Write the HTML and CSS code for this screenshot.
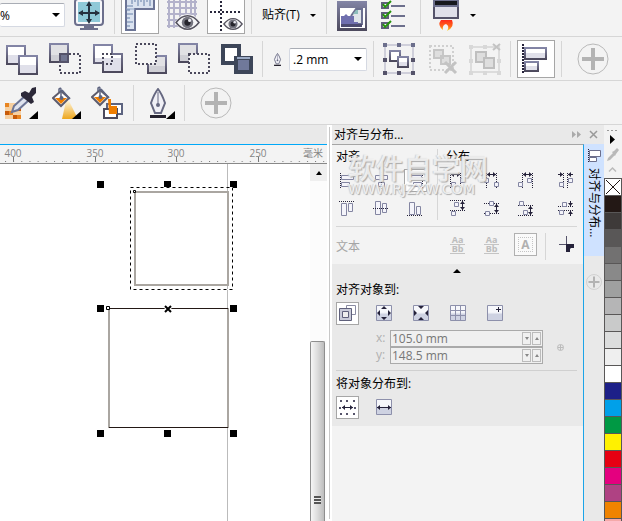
FILE: index.html
```html
<!DOCTYPE html>
<html lang="zh-CN">
<head>
    <meta charset="utf-8">
    <title>对齐与分布</title>
    <link rel="stylesheet" href="styles.css">
</head>
<body>
    <svg class="defs" aria-hidden="true">
        <defs>
            <linearGradient id="steel" x1="0" y1="0" x2="0" y2="1">
                <stop offset="0" stop-color="#8385a6"/>
                <stop offset="1" stop-color="#4c495c"/>
            </linearGradient>
            <linearGradient id="face" x1="0" y1="0" x2="0" y2="1">
                <stop offset="0.5" stop-color="#ffffff"/>
                <stop offset="0.5" stop-color="#e0e0ea"/>
            </linearGradient>
            <linearGradient id="shade" x1="0" y1="0" x2="0" y2="1">
                <stop offset="0.6" stop-color="#e1e1e4"/>
                <stop offset="0.6" stop-color="#cfcfd5"/>
            </linearGradient>
            <linearGradient id="glow" x1="0" y1="0" x2="0" y2="1">
                <stop offset="0" stop-color="#fdf3d8"/>
                <stop offset="1" stop-color="#eda61c"/>
            </linearGradient>
            <linearGradient id="flame" x1="0" y1="0" x2="0" y2="1">
                <stop offset="0" stop-color="#ff2a1a"/>
                <stop offset="0.6" stop-color="#ff6a1a"/>
                <stop offset="1" stop-color="#ffe02a"/>
            </linearGradient>
            <linearGradient id="tile" x1="0" y1="0" x2="0" y2="1">
                <stop offset="0.45" stop-color="#f6f7fb"/>
                <stop offset="0.6" stop-color="#ced2e2"/>
            </linearGradient>
            <marker id="tip" viewBox="0 0 3 5" refX="3" refY="2.500" markerWidth="3" markerHeight="5" markerUnits="userSpaceOnUse" orient="auto-start-reverse">
                <path d="M0 0L3 2.500L0 5Z" fill="#25223a"/>
            </marker>
        </defs>
        <symbol id="eye" viewBox="0 0 24 16">
            <path d="M0 8Q5 0 12 0T24 8Q19 16 12 16T0 8Z" fill="#fff"/>
            <path d="M1 8Q6 1.500 12 1.500T23 8Q18 14.500 12 14.500T1 8Z" fill="#f5f5f7" stroke="#55535f" stroke-width="1.500"/>
            <circle cx="12" cy="8" r="5.500" fill="#74747f"/>
            <circle cx="12" cy="8" r="3" fill="#26252d"/>
            <circle cx="14" cy="6" r="1.500" fill="#e8e8f0"/>
        </symbol>
        <symbol id="plus" viewBox="0 0 32 32">
            <circle cx="16" cy="16" r="15" fill="none" stroke="#b9b9b9"/>
            <path d="M16 5V27M5 16H27" stroke="#b3b3b3" stroke-width="4"/>
        </symbol>
        <symbol id="bucket" viewBox="0 0 20 21">
            <path d="M9 4L17 11L9 19L1 11Z" fill="#fff" stroke="#5d5c6d" stroke-width="2"/>
            <path d="M3 11H15L9 17Z" fill="#ee7d00"/>
            <path d="M9 11V3Q9 0 7 2V5M10 3L18 12" fill="none" stroke="#5d6480" stroke-width="1.500"/>
            <circle cx="9.500" cy="11" r="2" fill="#5d6480"/>
        </symbol>
        <symbol id="nib" viewBox="0 0 16 30">
            <path d="M8 1Q4 6 1 15L5 25H11L15 15Q12 6 8 1Z" fill="#f0f0f6" stroke="#666881" stroke-width="2"/>
            <path d="M8 4V17" stroke="#666881"/>
            <circle cx="8" cy="17" r="2" fill="#666881"/>
            <path d="M0 27H16V30H0Z" fill="#25222f"/>
        </symbol>
    </svg>

    <header class="toolbars">
        <div class="toolbar toolbar-top">
            <select class="zoom-level" aria-label="缩放级别"><option>%</option></select>
            <button class="tool" aria-label="全屏预览">
                <svg width="38" height="38" viewBox="0 0 38 38">
                    <rect x="5" y="3" width="28" height="26" rx="3" fill="#f7f7fa" stroke="#6c6f8c" stroke-width="2"/>
                    <rect x="8" y="6" width="22" height="20" fill="#8fc9d8"/>
                    <path d="M19 8V26M9 17H29" stroke="#26313f" stroke-width="2"/>
                    <path d="M19 5L22 10H16ZM19 28L22 23H16ZM8 17L13 14V20ZM30 17L25 14V20Z" fill="#26313f"/>
                    <path d="M14 31H24M10 33H28" stroke="#6c6f8c" stroke-width="2"/>
                </svg>
            </button>
            <span class="sep"></span>
            <button class="tool pressed" aria-label="标尺">
                <svg width="38" height="38" viewBox="0 0 38 38">
                    <path d="M5 1H33V13H14V34H5Z" fill="#dbe3f0" stroke="#6c7596" stroke-width="2"/>
                    <path d="M14 13H5" stroke="#8fa3c5"/>
                    <path d="M11 2V8M14 2V6M17 2V10M20 2V6M23 2V10M26 2V6M29 2V10M6 10H12M6 14H9M6 18H12M6 22H9M6 26H12M6 30H9" stroke="#6680a8"/>
                </svg>
            </button>
            <button class="tool" aria-label="网格">
                <svg width="38" height="38" viewBox="0 0 38 38">
                    <path d="M5 1V32M10 1V32M16 1V32M22 1V32M27 1V32M31 1V28M3 6H33M3 12H33M3 18H33M3 24H30M3 30H20" stroke="#b3b2cb" stroke-width="2"/>
                    <use href="#eye" x="11" y="18" width="25" height="17"/>
                </svg>
            </button>
            <button class="tool pressed" aria-label="辅助线">
                <svg width="38" height="38" viewBox="0 0 38 38">
                    <path d="M14 1V36M3 16H34" stroke="#29283d" stroke-width="2" stroke-dasharray="2 2"/>
                    <use href="#eye" x="16" y="21" width="20" height="14"/>
                </svg>
            </button>
            <span class="sep"></span>
            <button class="snap">贴齐(T)<i class="caret"></i></button>
            <span class="sep"></span>
            <button class="tool" aria-label="欢迎屏幕">
                <svg width="38" height="38" viewBox="0 0 38 38">
                    <path d="M4 5H34V35H4Z" fill="url(#steel)"/>
                    <path d="M7 12H32V32H7Z" fill="#fff"/>
                    <path d="M18 20L23 13H29V28H21" fill="#dfe4e9" stroke="#6c7090" stroke-width="2"/>
                    <path d="M20 18L23 14H25V18Z" fill="#8cbdbc"/>
                    <path d="M8 20H11L13 18L15 20H21V26H25V30H8Z" fill="#6f6fae"/>
                    <path d="M8 28H29V31H8Z" fill="#4c4b70"/>
                </svg>
            </button>
            <button class="tool" aria-label="选项">
                <svg width="38" height="38" viewBox="0 0 38 38">
                    <path d="M5 6H13V13H5ZM5 16H13V23H5ZM5 26H13V33H5Z" fill="#5f607b"/>
                    <path d="M7 8H11V11H7ZM7 18H11V21H7ZM7 28H11V31H7Z" fill="#fff"/>
                    <path d="M7 8L9 11L15 5M7 18L9 21L15 15M7 28L9 31L15 25" fill="none" stroke="#26920c" stroke-width="2"/>
                    <path d="M15 10H29M15 20H29M15 30H29" stroke="#6c6f8c" stroke-width="2"/>
                </svg>
            </button>
            <span class="sep"></span>
            <button class="tool" aria-label="应用程序启动器">
                <svg width="38" height="38" viewBox="0 0 38 38">
                    <path d="M7 1H31V22H7Z" fill="#e0e0ea" stroke="#55536a" stroke-width="2"/>
                    <path d="M6 1H32V11H6Z" fill="#6c6f8c"/>
                    <path d="M8 5H30V9H8Z" fill="#16181d"/>
                    <path d="M14 24H25Q28 31 20 35Q23 30 19 28Q15 29 16 34Q10 29 14 24Z" fill="url(#flame)"/>
                </svg>
            </button>
            <button class="drop" aria-label="更多"><i class="caret"></i></button>
        </div>

        <div class="toolbar">
            <button class="tool" aria-label="合并">
                <svg width="38" height="38" viewBox="0 0 38 38">
                    <path d="M4 6H22V24H4Z" fill="url(#face)" stroke="url(#steel)" stroke-width="2"/>
                    <path d="M16 16H34V34H16Z" fill="url(#face)" stroke="url(#steel)" stroke-width="2"/>
                </svg>
            </button>
            <button class="tool" aria-label="相交">
                <svg width="38" height="38" viewBox="0 0 38 38">
                    <path d="M4 4H22V22H4Z" fill="url(#shade)" stroke="url(#steel)" stroke-width="2"/>
                    <path d="M14 14H22V22H14Z" fill="#70748f" stroke="#55536a" stroke-width="2"/>
                    <path d="M23 14H34V33H14V23" fill="none" stroke="#4b495c" stroke-width="2" stroke-dasharray="2 2"/>
                </svg>
            </button>
            <button class="tool" aria-label="简化">
                <svg width="38" height="38" viewBox="0 0 38 38">
                    <path d="M5 5H23V14H33V32H14V23H5Z" fill="url(#face)" stroke="url(#steel)" stroke-width="2"/>
                    <path d="M14 23V14H23V24H14" fill="none" stroke="#4b495c" stroke-width="2" stroke-dasharray="2 2"/>
                </svg>
            </button>
            <button class="tool" aria-label="移除后面对象">
                <svg width="38" height="38" viewBox="0 0 38 38">
                    <path d="M16 16H34V33H16Z" fill="url(#shade)" stroke="url(#steel)" stroke-width="2"/>
                    <path d="M4 4H24V24H4Z" fill="#f4f4f4" stroke="#4b495c" stroke-width="2" stroke-dasharray="2 2"/>
                </svg>
            </button>
            <button class="tool" aria-label="移除前面对象">
                <svg width="38" height="38" viewBox="0 0 38 38">
                    <path d="M4 4H22V22H4Z" fill="url(#shade)" stroke="url(#steel)" stroke-width="2"/>
                    <path d="M14 14H34V33H14Z" fill="#f4f4f4" stroke="#4b495c" stroke-width="2" stroke-dasharray="2 2"/>
                </svg>
            </button>
            <button class="tool" aria-label="边界">
                <svg width="38" height="38" viewBox="0 0 38 38">
                    <path d="M5 6H21V23H5Z" fill="#fff" stroke="#3d4659" stroke-width="4"/>
                    <path d="M18 18H33V32H18Z" fill="#70799a" stroke="#3d4659" stroke-width="4"/>
                    <path d="M7 8H19V16H16V21H7Z" fill="#fff"/>
                    <path d="M20 19V18H32" stroke="#9aa9c4" fill="none" stroke-width="2"/>
                </svg>
            </button>
            <span class="sep"></span>
            <label class="pen-label" for="outline" aria-label="轮廓宽度">
                <svg width="9" height="13"><use href="#nib" width="9" height="13"/></svg>
            </label>
            <select class="outline-width" id="outline"><option>.2 mm</option></select>
            <span class="sep"></span>
            <button class="tool" aria-label="组合对象">
                <svg width="38" height="38" viewBox="0 0 38 38">
                    <path d="M5 5H33V33H5Z" fill="none" stroke="#cfcfda" stroke-width="2"/>
                    <path d="M3 3H7V7H3ZM17 3H21V7H17ZM31 3H35V7H31Z" fill="#6c6f8c"/>
                    <path d="M3 18H7V22H3ZM31 18H35V22H31ZM3 31H7V35H3ZM17 31H21V35H17ZM31 31H35V35H31Z" fill="#55536a"/>
                    <path d="M10 11H20V21H10Z" fill="#fff" stroke="url(#steel)" stroke-width="2"/>
                    <path d="M18 17H28V27H18Z" fill="url(#face)" stroke="url(#steel)" stroke-width="2"/>
                </svg>
            </button>
            <button class="tool" disabled aria-label="取消组合对象">
                <svg width="38" height="38" viewBox="0 0 38 38">
                    <path d="M7 6H30V30H7Z" fill="none" stroke="#d0d0d0" stroke-width="2" stroke-dasharray="2 2"/>
                    <path d="M11 10H20V18H11ZM18 16H27V24H18Z" fill="#dedede" stroke="#c6c6c6" stroke-width="2"/>
                    <path d="M22 22L33 33M33 22L22 33" stroke="#c3c3c3" stroke-width="3"/>
                </svg>
            </button>
            <button class="tool" disabled aria-label="取消组合所有对象">
                <svg width="38" height="38" viewBox="0 0 38 38">
                    <path d="M5 7H33V32H5Z" fill="none" stroke="#dcdcdc" stroke-width="2"/>
                    <path d="M3 5H7V9H3ZM17 5H21V9H17ZM3 19H7V23H3ZM31 19H35V23H31ZM3 31H7V35H3ZM17 31H21V35H17ZM31 31H35V35H31Z" fill="#d8d8d8"/>
                    <path d="M10 12H20V22H10Z" fill="#dedede" stroke="#bfbfbf" stroke-width="2"/>
                    <path d="M18 18H28V28H18Z" fill="#dedede" stroke="#bfbfbf" stroke-width="2"/>
                    <path d="M27 4L34 10M34 4L27 10" stroke="#c3c3c3" stroke-width="2"/>
                </svg>
            </button>
            <span class="sep"></span>
            <button class="tool pressed" aria-label="对齐与分布">
                <svg width="38" height="38" viewBox="0 0 38 38">
                    <path d="M6 4V34" stroke="#25223a" stroke-width="2" stroke-dasharray="2 1"/>
                    <path d="M8 8H29V19H8Z" fill="url(#face)" stroke="url(#steel)" stroke-width="2"/>
                    <path d="M8 22H21V31H8Z" fill="url(#face)" stroke="url(#steel)" stroke-width="2"/>
                </svg>
            </button>
            <span class="sep"></span>
            <button class="tool wide" aria-label="自定义属性栏"><svg width="32" height="32"><use href="#plus"/></svg></button>
        </div>

        <div class="toolbar">
            <button class="tool" aria-label="颜色滴管">
                <svg width="38" height="38" viewBox="0 0 38 38">
                    <path d="M2 19H18V35H2Z" fill="#f6cfa0"/>
                    <path d="M2 19H6V23H2ZM10 23H14V27H10ZM6 27H10V31H6ZM14 31H18V35H14Z" fill="#e88420"/>
                    <path d="M2 27H6V31H2ZM10 31H14V35H10ZM14 23H18V27H14Z" fill="#c85a08"/>
                    <path d="M22 12L26 16L15 26L9 28L11 22Z" fill="#dfe3ee" stroke="#6c7596" stroke-width="2"/>
                    <path d="M18 9L22 7L26 9L29 4L33 3V9L29 13L31 18L28 20L18 12Z" fill="#2b2838"/>
                    <path d="M26 35H35V27Z" fill="#000"/>
                </svg>
            </button>
            <button class="tool" aria-label="交互式填充">
                <svg width="38" height="38" viewBox="0 0 38 38">
                    <path d="M20 17H23L32 35H16Z" fill="url(#glow)"/>
                    <use href="#bucket" x="6" y="3" width="20" height="21"/>
                    <path d="M26 35H35V27Z" fill="#000"/>
                </svg>
            </button>
            <button class="tool" aria-label="智能填充">
                <svg width="38" height="38" viewBox="0 0 38 38">
                    <path d="M18 20H33V30H18Z" fill="#fff" stroke="#5d6480" stroke-width="2"/>
                    <path d="M15 25H28V34H15Z" fill="#fff" stroke="#4b495c" stroke-width="2"/>
                    <path d="M19 15H22V22H28V30H20Z" fill="#ee7d00"/>
                    <use href="#bucket" x="2" y="2" width="20" height="21"/>
                </svg>
            </button>
            <span class="sep"></span>
            <button class="tool" aria-label="轮廓笔">
                <svg width="38" height="38" viewBox="0 0 38 38">
                    <use href="#nib" x="10" y="4" width="16" height="30"/>
                    <path d="M26 35H35V27Z" fill="#000"/>
                </svg>
            </button>
            <span class="sep"></span>
            <button class="tool wide" aria-label="自定义工具箱"><svg width="32" height="32"><use href="#plus"/></svg></button>
        </div>
    </header>

    <main class="workspace">
        <section class="document">
            <div class="doc-tabs"></div>
            <svg class="ruler" height="18">
                <defs>
                    <pattern id="ticks" x="5" y="0" width="8.160" height="18" patternUnits="userSpaceOnUse">
                        <rect x="0" y="16" width="1" height="1" fill="#777"/>
                    </pattern>
                </defs>
                <rect width="100%" height="18" fill="url(#ticks)"/>
                <path d="M13.500 12V17M95.500 12V17M176.500 12V17M258.500 12V17" stroke="#777"/>
                <g class="ruler-text" text-anchor="middle">
                    <text x="13" y="12">400</text>
                    <text x="95" y="12">350</text>
                    <text x="176" y="12">300</text>
                    <text x="258" y="12">250</text>
                    <text x="313" y="12">毫米</text>
                </g>
            </svg>
            <div class="page">
                <svg class="drawing">
                    <path d="M227.500 0V2000" stroke="#bbb"/>
                    <g fill="none" stroke="#aaa6a1" stroke-width="2">
                        <rect x="135" y="28" width="93" height="93"/>
                        <path d="M109 144V264M228 144V264"/>
                    </g>
                    <path d="M109 144.500H228M109 263.500H228" stroke="#231815"/>
                    <path d="M97 17h7v7h-7zM164 17h7v7h-7zM230 17h7v7h-7zM97 141h7v7h-7zM230 141h7v7h-7zM97 266h7v7h-7zM164 266h7v7h-7zM230 266h7v7h-7z" fill="#000"/>
                    <rect x="130.500" y="23.500" width="102" height="102" fill="none" stroke="#fff"/>
                    <rect x="130.500" y="23.500" width="102" height="102" fill="none" stroke="#000" stroke-dasharray="3 3"/>
                    <path d="M133.500 26.500h2v2h-2zM106.500 142.500h3v3h-3z" fill="#fff" stroke="#000"/>
                    <path d="M165 142L171 148M171 142L165 148" stroke="#fff" stroke-width="4"/>
                    <path d="M165 142L171 148M171 142L165 148" stroke="#000" stroke-width="2"/>
                </svg>
                <div class="scrollbar">
                    <button class="scroll-up" aria-label="向上滚动"><i class="caret up"></i></button>
                    <div class="thumb"><i class="grip"></i></div>
                </div>
            </div>
        </section>

        <div class="splitter"></div>

        <aside class="docker">
            <div class="docker-head">
                <h2>对齐与分布...</h2>
                <button class="head-btn" aria-label="折叠泊坞窗">
                    <svg width="9" height="7"><path d="M0 0L4 3.500L0 7ZM5 0L9 3.500L5 7Z" fill="#aaa"/></svg>
                </button>
                <button class="head-btn" aria-label="关闭">
                    <svg width="9" height="9"><path d="M1 1L8 8M8 1L1 8" stroke="#999" stroke-width="1.500"/></svg>
                </button>
            </div>
            <div class="docker-main">
                <div class="panel">
                    <div class="block basic">
                        <div class="pair">
                            <div class="group align">
                                <h3>对齐</h3>
                                <div class="grid">
                                    <button class="mini" aria-label="左对齐"><svg width="23" height="23"><path class="dots" d="M4.500 4V19"/><path class="bar" d="M5.500 6.500h12v4h-12zM5.500 13.500h8v4h-8z"/></svg></button>
                                    <button class="mini" aria-label="水平居中对齐"><svg width="23" height="23"><path class="bar" d="M5.500 6.500h12v4h-12zM8.500 13.500h6v4h-6z"/><path class="dots" d="M11.500 3V20"/></svg></button>
                                    <button class="mini pressed" aria-label="右对齐"><svg width="23" height="23"><path class="dots" d="M18.500 4V19"/><path class="bar" d="M5.500 6.500h12v4h-12zM9.500 13.500h8v4h-8z"/></svg></button>
                                    <button class="mini" aria-label="顶端对齐"><svg width="23" height="23"><path class="dots" d="M3 4.500H19"/><path class="bar" d="M5.500 6.500h5v12h-5zM12.500 6.500h4v8h-4z"/></svg></button>
                                    <button class="mini" aria-label="垂直居中对齐"><svg width="23" height="23"><path class="bar" d="M5.500 4.500h5v13h-5zM12.500 6.500h4v9h-4z"/><path class="dots" d="M3 11.500H19"/></svg></button>
                                    <button class="mini" aria-label="底端对齐"><svg width="23" height="23"><path class="dots" d="M3 18.500H19"/><path class="bar" d="M5.500 5.500h5v12h-5zM12.500 9.500h4v8h-4z"/></svg></button>
                                </div>
                            </div>
                            <div class="group distribute">
                                <h3>分布</h3>
                                <div class="grid four">
                                    <button class="mini" aria-label="左分散排列"><svg width="23" height="23"><path class="dots" d="M4.500 4V19M14.500 4V19"/><path class="bar" d="M5.500 13.500h4v4h-4zM14.500 9.500h4v4h-4z"/><path class="arrow" d="M5 5.500H14"/></svg></button>
                                    <button class="mini" aria-label="水平分散排列中心"><svg width="23" height="23"><path class="dots" d="M6.500 4V19M16.500 4V19"/><path class="bar" d="M4.500 9.500h4v4h-4zM14.500 13.500h4v4h-4z"/><path class="arrow" d="M7 5.500H16"/></svg></button>
                                    <button class="mini" aria-label="右分散排列"><svg width="23" height="23"><path class="dots" d="M8.500 4V19M18.500 4V19"/><path class="bar" d="M4.500 13.500h4v4h-4zM13.500 9.500h4v4h-4z"/><path class="arrow" d="M9 5.500H18"/></svg></button>
                                    <button class="mini" aria-label="水平分散排列间距"><svg width="23" height="23"><path class="dots" d="M9.500 4V19M13.500 4V19"/><path class="bar" d="M5.500 13.500h4v4h-4zM14.500 9.500h4v4h-4z"/><path class="arrow-in" d="M4 5.500H9"/><path class="arrow-in" d="M19 5.500H14"/></svg></button>
                                    <button class="mini" aria-label="顶部分散排列"><svg width="23" height="23"><path class="dots" d="M4 3.500H19M4 13.500H19"/><path class="bar" d="M8.500 5.500h4v4h-4zM5.500 14.500h4v4h-4z"/><path class="arrow" d="M16.500 4V13"/></svg></button>
                                    <button class="mini" aria-label="垂直分散排列中心"><svg width="23" height="23"><path class="dots" d="M4 6.500H19M4 16.500H19"/><path class="bar" d="M9.500 4.500h4v4h-4zM5.500 14.500h4v4h-4z"/><path class="arrow" d="M16.500 7V16"/></svg></button>
                                    <button class="mini" aria-label="底部分散排列"><svg width="23" height="23"><path class="dots" d="M4 8.500H19M4 18.500H19"/><path class="bar" d="M5.500 4.500h4v4h-4zM9.500 13.500h4v4h-4z"/><path class="arrow" d="M16.500 9V18"/></svg></button>
                                    <button class="mini" aria-label="垂直分散排列间距"><svg width="23" height="23"><path class="dots" d="M4 9.500H19M4 13.500H19"/><path class="bar" d="M8.500 5.500h4v4h-4zM5.500 13.500h4v4h-4z"/><path class="arrow-in" d="M16.500 4V9"/><path class="arrow-in" d="M16.500 19V14"/></svg></button>
                                </div>
                            </div>
                        </div>
                        <div class="text-row">
                            <h3 class="muted">文本</h3>
                            <div class="grid four">
                                <button class="mini aabb" disabled><span>Aa</span><span>Bb</span></button>
                                <button class="mini aabb" disabled><span>Aa</span><span>Bb</span></button>
                                <button class="mini letter" disabled>A</button>
                                <div class="edge">
                                    <button class="mini" aria-label="指定点"><svg width="23" height="23"><path d="M11.500 3V18M4 11.500H19" stroke="#55536a"/><path d="M11 19V11H19V15H16L15 16V19Z" fill="#25223a"/></svg></button>
                                </div>
                            </div>
                        </div>
                    </div>

                    <div class="block more">
                        <button class="collapse" aria-label="收起"><i class="caret up"></i></button>
                        <h3>对齐对象到:</h3>
                        <div class="row">
                            <button class="mini pressed" aria-label="活动对象"><svg width="23" height="23"><path d="M10.500 3.500h9v9h-9z" fill="#fff" stroke="#8a8ca3"/><path d="M3.500 6.500h12v12h-12z" fill="#c9cbd9" stroke="#5f607b"/><path d="M6.500 9.500h6v6h-6z" fill="#eee" stroke="#5f607b"/></svg></button>
                            <button class="mini" aria-label="页面边缘"><svg width="23" height="23"><path class="tile" d="M3.500 3.500h15v15h-15z"/><path d="M11 4L14 7H8ZM11 18L14 15H8ZM4 11L7 8V14ZM18 11L15 8V14Z" fill="#25223a"/></svg></button>
                            <button class="mini" aria-label="页面中心"><svg width="23" height="23"><path class="tile" d="M3.500 3.500h15v15h-15z"/><path d="M11 7L14 4H8ZM11 15L14 18H8ZM7 11L4 8V14ZM15 11L18 8V14Z" fill="#25223a"/></svg></button>
                            <button class="mini" aria-label="网格"><svg width="23" height="23"><path class="tile" d="M3.500 3.500h15v15h-15z"/><path d="M8.500 4V18M13.500 4V18M4 8.500H18M4 13.500H18" stroke="#8d90ab"/></svg></button>
                            <button class="mini" aria-label="指定点"><svg width="23" height="23"><path class="tile" d="M3.500 3.500h15v15h-15z"/><path d="M14.500 5V10M12 7.500H17" stroke="#25223a"/></svg></button>
                        </div>
                        <div class="coords">
                            <div class="fields">
                                <label for="posX">x:</label>
                                <div class="spin">
                                    <input type="text" id="posX" value="105.0 mm" disabled>
                                    <button disabled aria-label="减"><i class="caret"></i></button>
                                    <button disabled aria-label="加"><i class="caret up"></i></button>
                                </div>
                                <label for="posY">y:</label>
                                <div class="spin">
                                    <input type="text" id="posY" value="148.5 mm" disabled>
                                    <button disabled aria-label="减"><i class="caret"></i></button>
                                    <button disabled aria-label="加"><i class="caret up"></i></button>
                                </div>
                            </div>
                            <button class="target" disabled aria-label="拾取点">
                                <svg width="7" height="7"><circle cx="3.500" cy="3.500" r="3" fill="none" stroke="#bbb"/><path d="M3.500 1V6M1 3.500H6" stroke="#bbb"/></svg>
                            </button>
                        </div>
                        <h3>将对象分布到:</h3>
                        <div class="row">
                            <button class="mini pressed" aria-label="选定的范围"><svg width="23" height="23"><path d="M4 4h2v2h-2zM10 4h2v2h-2zM17 4h2v2h-2zM3 11h2v2h-2zM18 11h2v2h-2zM4 17h2v2h-2zM10 17h2v2h-2zM17 17h2v2h-2z" fill="#55536a"/><path class="arrow" d="M6 11.500H17"/></svg></button>
                            <button class="mini" aria-label="页面范围"><svg width="23" height="23"><path class="tile" d="M3.500 3.500h15v15h-15z"/><path class="arrow" d="M4 11.500H18"/></svg></button>
                        </div>
                    </div>
                    <div class="watermark" aria-hidden="true">
                        <b>软件自学网</b>
                        <small>WWW.RJZXW.COM</small>
                    </div>
                </div>
                <nav class="side-tabs">
                    <button class="side-tab">
                        <svg width="13" height="13"><path d="M0.500 0V13" stroke="#25223a" stroke-dasharray="1 1"/><path d="M1.500 1.500h11v6h-11zM1.500 8.500h7v4h-7z" fill="#fff" stroke="#6c6f8c"/></svg>
                        <span>对齐与分布...</span>
                    </button>
                    <button class="add-tab" aria-label="添加"><svg width="16" height="16"><use href="#plus" width="16" height="16"/></svg></button>
                </nav>
            </div>
        </aside>

        <aside class="palette">
            <svg class="palette-tools" width="17" height="53">
                <path d="M3 5.500H14" stroke="#999" stroke-dasharray="2 2"/>
                <path d="M6 10L11 14.500L6 19Z" fill="#000"/>
                <path d="M3 36L4 33L9 28L11 30L6 35ZM8 27L10 26L13 23L15 25L12 29L11 31Z" fill="#b9b9b9"/>
                <path d="M5 46.500L8.500 43L12 46.500" fill="none" stroke="#bbb" stroke-width="1.500"/>
            </svg>
            <div class="swatches">
                <button class="swatch none" aria-label="无"><svg width="16" height="16"><path d="M1 1L15 15M15 1L1 15" stroke="#231815"/></svg></button>
                <button class="swatch c100"></button>
                <button class="swatch c90"></button>
                <button class="swatch c80"></button>
                <button class="swatch c70"></button>
                <button class="swatch c60"></button>
                <button class="swatch c50"></button>
                <button class="swatch c40"></button>
                <button class="swatch c30"></button>
                <button class="swatch c20"></button>
                <button class="swatch c10"></button>
                <button class="swatch white"></button>
                <button class="swatch blue"></button>
                <button class="swatch cyan"></button>
                <button class="swatch green"></button>
                <button class="swatch yellow"></button>
                <button class="swatch red"></button>
                <button class="swatch magenta"></button>
                <button class="swatch purple"></button>
                <button class="swatch orange"></button>
                <button class="swatch pink"></button>
            </div>
        </aside>
    </main>
</body>
</html>
```
FILE: styles.css
```css
* {
    box-sizing: border-box;
}

body {
    margin: 0;
    height: 100vh;
    display: flex;
    flex-direction: column;
    overflow: hidden;
    background: #f3f3f3;
    color: #000;
    font: 12px/16px "Open Sans", "Noto Sans CJK SC", sans-serif;
}

button {
    padding: 0;
    border: 0;
    background: none;
    font: inherit;
    color: inherit;
}

svg {
    display: block;
}

h2, h3 {
    margin: 0;
    font-size: 12px;
    font-weight: normal;
}

.defs {
    position: absolute;
    width: 0;
    height: 0;
}

.caret {
    display: block;
    width: 0;
    border: 4px solid transparent;
    border-top-color: #000;
    border-bottom: 0;
}

.caret.up {
    border-top: 0;
    border-bottom: 4px solid #000;
}

/* toolbars */
.toolbar {
    display: flex;
    align-items: center;
    gap: 5px;
    height: 44px;
    padding: 3px 3px 2px;
    border-bottom: 1px solid #d6d6d6;
}

.toolbar-top {
    height: 37px;
    padding: 0 0 2px;
    align-items: flex-end;
    overflow: hidden;
}

.tool {
    flex: none;
    width: 38px;
    height: 38px;
}

.tool.wide {
    display: flex;
    justify-content: center;
    align-items: center;
    width: 50px;
}

.pressed {
    background: #fff;
    border: 1px solid #a6a6a6;
}

.pressed svg {
    margin: -1px;
}

.sep {
    flex: none;
    width: 3px;
    height: 36px;
    border: solid #f3f3f3;
    border-width: 0 1px;
    background: #d6d6d6;
}

select {
    appearance: none;
    border: 1px solid #d5d9e2;
    border-top-color: #a9adb5;
    border-radius: 2px;
    background: #fff url("data:image/svg+xml,%3Csvg xmlns='http://www.w3.org/2000/svg' width='8' height='4'%3E%3Cpath d='M0 0H8L4 4Z'/%3E%3C/svg%3E") no-repeat right 4px center;
    color: #000;
    font: inherit;
}

.zoom-level {
    width: 65px;
    height: 24px;
    margin-bottom: 7px;
    padding: 1px 0 0;
    border-left: 0;
}

.outline-width {
    width: 78px;
    height: 23px;
    padding: 2px 3px 0;
}

.pen-label {
    width: 15px;
    padding-left: 4px;
}

.snap {
    display: flex;
    align-items: center;
    justify-content: space-between;
    width: 62px;
    height: 38px;
    padding: 0 4px;
}

.drop {
    height: 38px;
}

.snap .caret,
.drop .caret {
    border-width: 3px 3px 0;
}

/* document window */
.workspace {
    flex: 1;
    display: flex;
    min-height: 0;
}

.document {
    flex: 1;
    display: flex;
    flex-direction: column;
    min-width: 0;
}

.doc-tabs {
    height: 20px;
    background: #e9e9e9;
    border-bottom: 1px solid #00a8f8;
}

.ruler {
    flex: none;
    width: 100%;
    background: #f3f3f3;
}

.ruler-text {
    font-size: 10px;
    fill: #858585;
}

.page {
    flex: 1;
    display: flex;
    min-height: 0;
    background: #fff;
    border-top: 1px solid #888;
}

.drawing {
    flex: 1;
    min-width: 0;
    height: 100%;
}

.scrollbar {
    display: flex;
    flex-direction: column;
    width: 17px;
    background: #fcfcfc;
}

.scroll-up {
    display: flex;
    justify-content: center;
    align-items: center;
    height: 17px;
    background: #efefef;
}

.scroll-up .caret {
    border-width: 0 3px 4px;
}

.thumb {
    flex: 1;
    width: 15px;
    margin-top: 160px;
    padding: 154px 3px 0;
    border: 1px solid #8e8e8e;
    border-bottom: 0;
    border-radius: 2px 2px 0 0;
    background: linear-gradient(to right, #f6f6f6, #dcdcdc 50%, #bdbdbd);
}

.grip {
    display: block;
    width: 7px;
    height: 8px;
    background: repeating-linear-gradient(#555 0 2px, #eee 2px 3px);
}

.splitter {
    width: 5px;
    border: 2px solid #fff;
    background: #c8c8c8;
}

/* docker */
.docker {
    display: flex;
    flex-direction: column;
    width: 272px;
    background: #e9e9e9;
}

.docker-head {
    display: flex;
    align-items: center;
    gap: 8px;
    height: 19px;
    padding: 0 6px 0 2px;
}

.docker-head h2 {
    flex: 1;
}

.docker-main {
    flex: 1;
    display: flex;
    min-height: 0;
}

.panel {
    position: relative;
    flex: 1;
    border-top: 1px solid #a5a5a5;
    border-right: 1px solid #1ba4e8;
    background: #f3f3f3;
}

.block {
    padding: 0 6px 0 4px;
}

.basic {
    padding-top: 4px;
    padding-bottom: 4px;
}

.pair {
    display: flex;
    justify-content: space-between;
    padding-bottom: 6px;
    border-bottom: 1px solid #d6d6d6;
}

.group h3 {
    margin-bottom: 4px;
}

.align {
    padding-right: 10px;
    border-right: 1px solid #d6d6d6;
}

.grid {
    display: grid;
    grid-template-columns: repeat(3, 23px);
    gap: 5px 11px;
}

.four {
    grid-template-columns: repeat(3, 23px) 29px;
    justify-items: end;
}

.mini {
    width: 23px;
    height: 23px;
}

.dots {
    fill: none;
    stroke: #25223a;
    stroke-dasharray: 1 1;
}

.bar {
    fill: #f4f4fa;
    stroke: #8486a2;
}

.arrow,
.arrow-in {
    fill: none;
    stroke: #25223a;
    marker-end: url(#tip);
}

.arrow {
    marker-start: url(#tip);
}

.tile {
    fill: url(#tile);
    stroke: #8d90ab;
}

.text-row {
    display: flex;
    justify-content: space-between;
    align-items: center;
    padding-top: 6px;
}

.muted {
    color: #a5a5a5;
}

.aabb {
    color: #bdbdbd;
    font: bold 9px/8px "Open Sans", sans-serif;
}

.aabb span {
    display: block;
    width: 15px;
    margin: 0 auto;
    border-bottom: 1px solid #c4c4c4;
}

.letter {
    border: 1px solid #b0b0b0;
    outline: 1px dotted #c4c4c4;
    outline-offset: -5px;
    background: #fafafa;
    color: #b0b0b0;
    font-weight: bold;
}

.edge {
    width: 32px;
    padding-left: 9px;
    border-left: 1px solid #d6d6d6;
}

.more {
    padding-bottom: 7px;
    background: #e9e9e9;
}

.collapse {
    display: flex;
    justify-content: center;
    width: 100%;
    padding: 5px 0 9px;
}

.more h3 {
    margin-bottom: 4px;
}

.row {
    display: flex;
    gap: 14px;
}

.coords {
    display: flex;
    justify-content: space-between;
    align-items: center;
    margin-bottom: 5px;
    padding: 5px 13px 6px 40px;
    border-bottom: 1px solid #d0d0d0;
}

.fields {
    display: grid;
    grid-template-columns: 14px 153px;
    color: #b0b0b0;
}

.spin {
    display: flex;
    align-items: center;
    gap: 1px;
    height: 17px;
    padding-right: 1px;
    border: 1px solid #aaa;
    background: #f0f0f0;
}

.spin input {
    flex: 1;
    min-width: 0;
    height: 15px;
    padding: 0 1px;
    border: 0;
    background: none;
    color: #777;
    font: inherit;
}

.spin button {
    display: flex;
    justify-content: center;
    align-items: center;
    width: 9px;
    height: 13px;
    border: 1px solid #bbb;
}

.spin .caret {
    border-width: 3px 2px 0;
    border-top-color: #888;
}

.spin .caret.up {
    border-width: 0 2px 3px;
    border-bottom-color: #888;
}

/* watermark lies over the panel */
.watermark {
    position: absolute;
    top: 9px;
    left: 16px;
    pointer-events: none;
    color: rgba(250, 250, 250, 0.8);
    text-shadow: 1px 1px 1px #aaa, -1px 0 1px #d0d0d0;
}

.watermark b {
    display: block;
    font-size: 28px;
    font-weight: 500;
    line-height: 28px;
}

.watermark small {
    display: block;
    font: 14px/14px "DejaVu Sans", sans-serif;
}

.side-tabs {
    width: 20px;
}

.side-tab {
    display: flex;
    flex-direction: column;
    align-items: center;
    gap: 6px;
    width: 20px;
    height: 112px;
    padding-top: 5px;
    background: #cfe2ff;
}

.side-tab span {
    writing-mode: vertical-rl;
    text-orientation: sideways;
    white-space: nowrap;
}

.add-tab {
    display: block;
    margin: 18px 2px;
}

/* colour palette */
.palette {
    width: 18px;
    background: #f3f3f3;
}

.swatches {
    display: flex;
    flex-direction: column;
    gap: 1px;
    padding: 1px;
    background: #595757;
}

.swatch {
    flex: none;
    height: 16px;
}

.none, .white { background: #fff; }
.c100 { background: #231815; }
.c90 { background: #3e3a39; }
.c80 { background: #595757; }
.c70 { background: #727171; }
.c60 { background: #898989; }
.c50 { background: #9fa0a0; }
.c40 { background: #b5b5b6; }
.c30 { background: #c9caca; }
.c20 { background: #dcdddd; }
.c10 { background: #efefef; }
.blue { background: #1d2088; }
.cyan { background: #00a0e9; }
.green { background: #009944; }
.yellow { background: #fff100; }
.red { background: #e60012; }
.magenta { background: #e4007f; }
.purple { background: #af4283; }
.orange { background: #f08300; }
.pink { background: #f5a9a9; }
```
